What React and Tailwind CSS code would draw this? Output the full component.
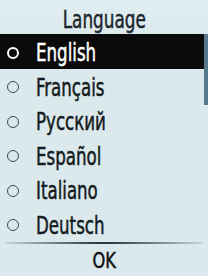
export default function App() {
  const items = ["English", "Français", "Русский", "Español", "Italiano", "Deutsch"];
  const font = { fontFamily: '"DejaVu Sans Condensed", "DejaVu Sans", sans-serif' };
  return (
    <div className="w-[208px] h-[276px] bg-[#dbe9ed] flex flex-col overflow-hidden" style={font}>
      <div className="h-[34px] flex items-center justify-center text-[24px] leading-none text-[#1b252b] pt-[5px] bg-gradient-to-b from-[#e1eef1] to-[#dbe9ed]">
        <span className="inline-block scale-x-78 origin-center [-webkit-text-stroke:0.45px]">Language</span>
      </div>
      <div className="flex">
        <div className="flex-1 flex flex-col">
          {items.map((t, i) => (
            <div key={t} className={`h-[34.5px] flex items-center ${i === 0 ? "bg-[#0a0a0a] text-white" : "text-[#141b20]"}`}>
              <div className="w-[36px] flex items-center pl-[7px] pt-[3px]">
                <div className={`w-[12px] h-[12px] rounded-full ${i === 0 ? "border-2 border-white" : "border-[1.5px] border-[#3d464b]"}`} />
              </div>
              <span className="inline-block scale-x-74 origin-left text-[25px] leading-none whitespace-nowrap pt-[3px] [-webkit-text-stroke:0.5px]">{t}</span>
            </div>
          ))}
        </div>
        <div className="w-[4px] flex flex-col">
          <div className="h-[71px] bg-[#55788d]" />
        </div>
      </div>
      <div className="h-[2px] mx-[5px] mt-[1px] bg-gradient-to-r from-[#c9d6dc] via-[#26323a] to-[#c9d6dc]" />
      <div className="flex-1 flex items-center justify-center text-[22px] leading-none text-[#111] pt-[2px]">
        <span className="inline-block scale-x-82 [-webkit-text-stroke:0.45px]">OK</span>
      </div>
    </div>
  );
}
